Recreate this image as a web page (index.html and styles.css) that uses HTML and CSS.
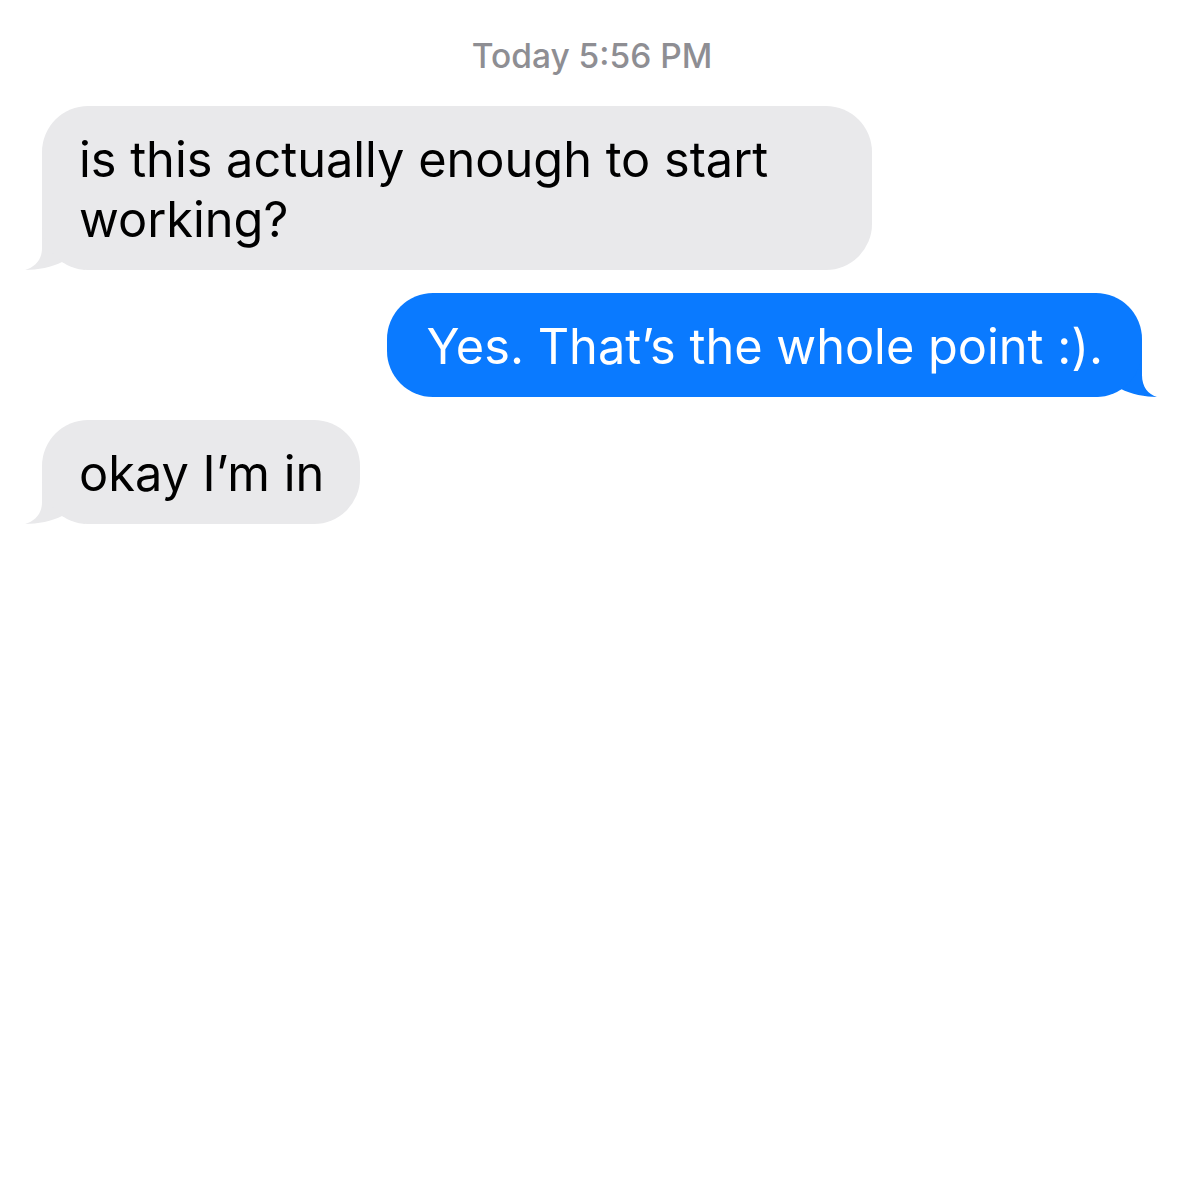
FILE: index.html
```html
<!DOCTYPE html>
<html lang="en">
<head>
    <meta charset="UTF-8">
    <meta name="viewport" content="width=device-width, initial-scale=1.0">
    <title>Messages</title>
    <link rel="stylesheet" href="styles.css">
</head>
<body>
    <div class="thread">
        <div class="stamp">Today 5:56 PM</div>

        <div class="msg them">is this actually enough to start working?</div>
        <div class="msg me">Yes. That’s the whole point :).</div>
        <div class="msg them">okay I’m in</div>
    </div>
</body>
</html>
```

FILE: styles.css
```css
body {
    margin: 0;
    background-color: #fff;
    font-family: Inter, "Noto Sans", sans-serif;
}

.thread {
    display: flex;
    flex-direction: column;
    gap: 23px;
    padding: 36px 40px 0 42px;
}

.stamp {
    text-align: center;
    color: #8e8e93;
    font-size: 33.5px;
    font-weight: 500;
    line-height: 40px;
    margin-bottom: 7px;
}

.msg {
    position: relative;
    max-width: 757px;
    padding: 24px 36px 20px 37px;
    border-radius: 46px;
    font-size: 48.7px;
    line-height: 60px;
}

/* tails, drawn behind the bubble */
.msg::before {
    content: "";
    position: absolute;
    z-index: -1;
    bottom: 0;
    width: 60px;
    height: 50px;
}

.them {
    align-self: flex-start;
    background-color: #e9e9eb;
    color: #000;
}

.them::before {
    left: -17px;
    background-color: #e9e9eb;
    clip-path: path("M 17 0 L 17 28 C 17 40 10 47 0 50 C 12 50 28 47 37 42 L 60 50 L 60 0 Z");
}

.me {
    align-self: flex-end;
    padding: 24px 39px 20px 40px;
    background-color: #0a7aff;
    color: #fff;
}

.me::before {
    right: -15px;
    background-color: #0a7aff;
    clip-path: path("M 45 0 L 45 28 C 45 40 51 47 60 50 C 49 50 33 47 24 42 L 0 50 L 0 0 Z");
}
```
